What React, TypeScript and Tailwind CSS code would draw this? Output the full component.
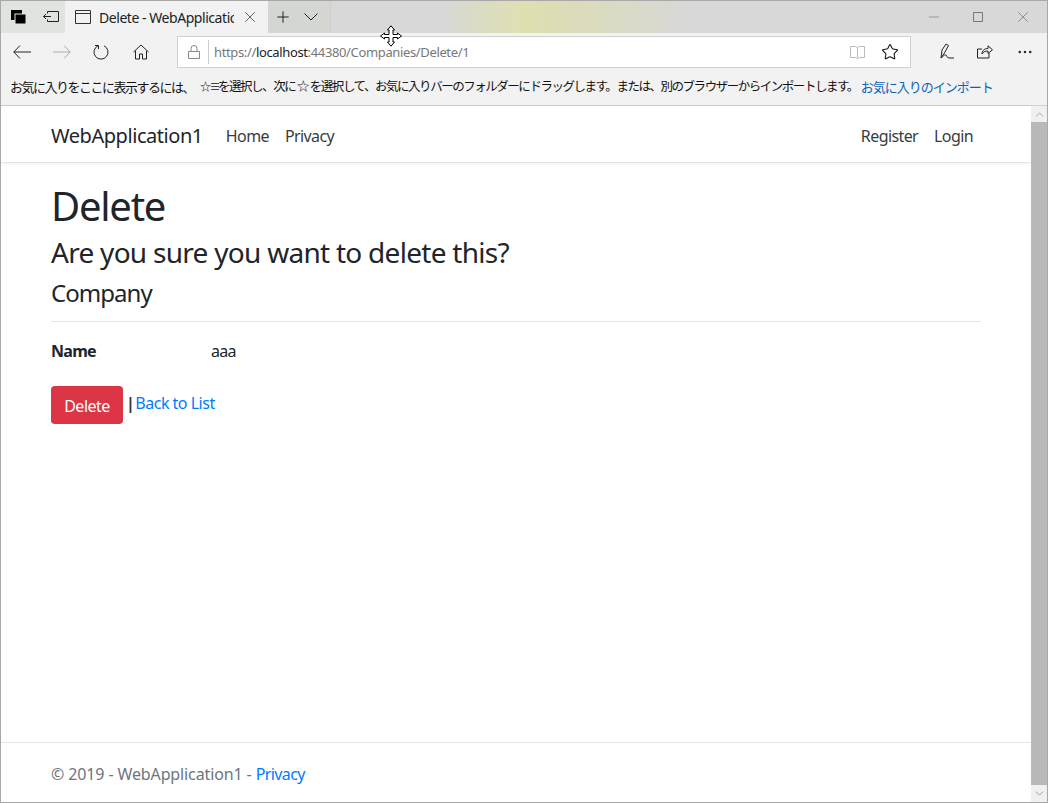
import { ChevronDown, ChevronUp, Ellipsis, Minus, Plus, Star, X } from "lucide-react";

const sans = "[font-family:'Noto_Sans','Noto_Sans_CJK_JP',sans-serif]";

function TabIcons() {
  return (
    <div className="flex h-full w-[64px] items-center gap-[16px] bg-[#dfe4e0] pl-[10px]">
      <svg width="16" height="15" viewBox="0 0 16 15">
        <rect x="0" y="0" width="11" height="10" fill="#000" />
        <rect x="4" y="4" width="11" height="10" fill="#000" stroke="#dfe4e0" />
      </svg>
      <svg width="16" height="12" viewBox="0 0 16 12" fill="none" stroke="#222">
        <path d="M4.500 2.500V.5h11v10h-11V8.500M8 5.500H.5M3 3 .5 5.500 3 8" />
      </svg>
    </div>
  );
}

function TitleBar() {
  return (
    <div className="flex h-[32px] bg-[linear-gradient(90deg,#d8d8d8_0%,#d8d8d8_42%,#dfe0b0_50%,#dcdcb8_54%,#d8d8d8_66%,#d8d8d8_100%)]">
      <TabIcons />
      <div className="flex h-full w-[203px] items-center bg-[#f2f2f2] pl-[10px] text-[14px] text-[#222]">
        <svg width="16" height="14" viewBox="0 0 16 14" fill="none" stroke="#333" className="shrink-0">
          <path d="M.5.5h15v13H.5zM.5 3.500h15" />
        </svg>
        <span className="ml-[8px] w-[135px] overflow-hidden whitespace-nowrap tracking-[-0.45px]">Delete - WebApplication1</span>
        <X size={18} strokeWidth={1} className="ml-[7px] text-[#333]" />
      </div>
      <div className="flex h-full w-[63px] items-center gap-[12px] border-r border-[#cfcfcf] bg-[#d4d6d2] pl-[6px]">
        <Plus size={18} strokeWidth={1.2} className="text-[#111]" />
        <svg width="14" height="8" viewBox="0 0 14 8" fill="none" stroke="#222">
          <path d="M.5.500 7 7l6.500-6.500" />
        </svg>
      </div>
      <div className="flex-1" />
      <div className="flex h-full items-center pr-[15px] text-[#777]">
        <Minus size={16} strokeWidth={1} />
        <svg width="10" height="10" viewBox="0 0 10 10" fill="none" stroke="#777" className="ml-[31px]">
          <path d="M.5.500h9v9h-9z" />
        </svg>
        <X size={18} strokeWidth={1} className="ml-[31px]" />
      </div>
    </div>
  );
}

function ToolBar() {
  return (
    <div className="flex h-[37px] items-center bg-[#f2f2f2] pt-[1px]">
      <div className="flex w-[176px] items-center pl-[12px]">
        <svg width="18" height="14" viewBox="0 0 18 14" fill="none" stroke="#222">
          <path d="M7 .5.8 7 7 13.500M.8 7H18" />
        </svg>
        <svg width="18" height="14" viewBox="0 0 18 14" fill="none" stroke="#aaa" className="ml-[22px]">
          <path d="M11 .5 17.200 7 11 13.500M17.200 7H0" />
        </svg>
        <svg width="16" height="16" viewBox="0 0 16 16" fill="none" stroke="#222" className="ml-[22px]">
          <path d="M5 1.800A7 7 0 1 0 11 1.800M5.500 5V1.500H2" />
        </svg>
        <svg width="16" height="16" viewBox="0 0 16 16" fill="none" stroke="#222" className="ml-[24px]">
          <path d="M.5 8 8 1l7.500 7M2.500 7v8h4v-5h3v5h4V7" />
        </svg>
      </div>
      <div className="flex h-[32px] w-[734px] items-center border border-[#cfcfcf] bg-white">
        <svg width="12" height="14" viewBox="0 0 12 14" fill="none" stroke="#888" className="ml-[10px]">
          <path d="M.5 6.500h11v7H.5zM3 6.500V3.500a3 3 0 0 1 6 0v3" />
        </svg>
        <div className="ml-[8px] h-[24px] w-px bg-[#ccc]" />
        <span className="ml-[5px] pt-[1px] text-[13px] tracking-[-0.36px] text-[#777]">
          https://<span className="text-[#222]">localhost</span>:44380/Companies/Delete/1
        </span>
        <svg width="15" height="14" viewBox="0 0 15 14" fill="none" stroke="#bbb" className="ml-auto">
          <path d="M.5 1.500h5l2 1 2-1h5v11h-5l-2 1-2-1h-5zM7.500 2.500v10" />
        </svg>
        <Star size={18} strokeWidth={1.4} className="ml-[16px] mr-[11px] text-[#111]" />
      </div>
      <div className="flex flex-1 items-center pl-[28px] text-[#222]">
        <svg width="16" height="18" viewBox="0 0 16 18" fill="none" stroke="#222">
          <path d="M2 15 3 7l4-6 2.500 1.500L6 9l-4 6c2-1 3-4 5-3 1 1 1 3 3 3h5" />
        </svg>
        <svg width="16" height="14" viewBox="0 0 16 14" fill="none" stroke="#222" className="ml-[22px]">
          <path d="M12 8v5H.5V4H5M5 9c0-4 3-5.500 6-5.500V.8l4.500 4L11 8.500V6C8 6 6 7 5 9Z" />
        </svg>
        <Ellipsis size={18} strokeWidth={1.4} className="ml-[23px]" />
      </div>
    </div>
  );
}

function FavoritesBar() {
  return (
    <div className="flex h-[36px] items-center whitespace-nowrap border-b border-[#d0d0d0] bg-[#f2f2f2] pl-[9px] text-[13px] tracking-[-1.5px] text-[#111]">
      <span className="w-[190px]">お気に入りをここに表示するには、</span>
      <span className="w-[14px] text-[11px] tracking-[-1.5px]">☆≡</span>
      <span className="ml-[4px] text-[12.5px] tracking-[-1.47px]">を選択し、次に ☆ を選択して、お気に入りバーのフォルダーにドラッグします。または、別のブラウザーからインポートします。</span>
      <span className="ml-[3px] tracking-[-1px] text-[#0a63b8]">お気に入りのインポート</span>
    </div>
  );
}

function Scrollbar() {
  return (
    <div className="flex w-[16px] flex-col bg-[#b9b9b9]">
      <div className="flex h-[16px] items-center justify-center bg-[#f0f0f0] text-[#999]">
        <ChevronUp size={13} strokeWidth={1.4} />
      </div>
      <div className="flex-1" />
      <div className="flex h-[17px] items-center justify-center bg-[#f0f0f0] text-[#888]">
        <ChevronDown size={13} strokeWidth={1.4} />
      </div>
    </div>
  );
}

function Page() {
  return (
    <div className="flex min-w-0 flex-1 flex-col bg-white text-[#212529]">
      <nav className="flex h-[57px] items-center border-b border-[#e5e5e5] pl-[50px] pr-[58px] pt-[4px] text-[16px] tracking-[-0.6px] text-[#393c3f] shadow-[0_1px_4px_rgba(0,0,0,0.06)]">
        <span className="text-[20px] tracking-[-0.45px] text-[#212529]">WebApplication1</span>
        <span className="ml-[23px]">Home</span>
        <span className="ml-[16px]">Privacy</span>
        <span className="ml-auto">Register</span>
        <span className="ml-[16px]">Login</span>
      </nav>
      <main className="flex-1 px-[50px]">
        <h1 className="mt-[19px] text-[40px] leading-[48px] tracking-[-1.25px]">Delete</h1>
        <h2 className="mt-[5px] text-[28px] leading-[34px] tracking-[-0.72px]">Are you sure you want to delete this?</h2>
        <h3 className="mt-[9px] text-[24px] leading-[29px] tracking-[-0.95px]">Company</h3>
        <hr className="mt-[14px] border-[#e5e5e5]" />
        <div className="mt-[17px] flex text-[16px] leading-[24px] tracking-[-0.7px]">
          <span className="w-[160px] font-bold">Name</span>
          <span>aaa</span>
        </div>
        <div className="mt-[23px] flex text-[16px] tracking-[-0.5px]">
          <button className="flex h-[38px] w-[72px] items-center justify-center rounded-[4px] bg-[#dc3545] pt-[1px] text-white">Delete</button>
          <span className="ml-[3px] mt-[5px] font-bold leading-[24px] text-[#333]">|</span>
          <a className="ml-[1px] mt-[5px] leading-[24px] text-[#007bff]">Back to List</a>
        </div>
      </main>
      <footer className="flex h-[60px] items-center border-t border-[#e5e5e5] pl-[50px] text-[16px] tracking-[-0.12px] text-[#6c757d]">
        <span className="mt-[3px]">
          © 2019 - WebApplication1 - <a className="tracking-[-0.6px] text-[#007bff]">Privacy</a>
        </span>
      </footer>
    </div>
  );
}

export default function App() {
  return (
    <div className={`relative flex h-[803px] w-[1048px] flex-col overflow-hidden border border-[#a8a8a8] ${sans}`}>
      <TitleBar />
      <ToolBar />
      <FavoritesBar />
      <div className="flex min-h-0 flex-1">
        <Page />
        <Scrollbar />
      </div>
      {/* move cursor sitting over the address bar */}
      <svg width="22" height="22" viewBox="0 0 22 22" fill="#fff" stroke="#000" className="absolute left-[379px] top-[24px]">
        <path d="M11 .8 14.500 5H13v4.500h4.500V8l4 3-4 3v-1.500H13V17h1.500L11 21.200 7.500 17H9v-4.500H4.500V14l-4-3 4-3v1.500H9V5H7.500Z" />
      </svg>
    </div>
  );
}
